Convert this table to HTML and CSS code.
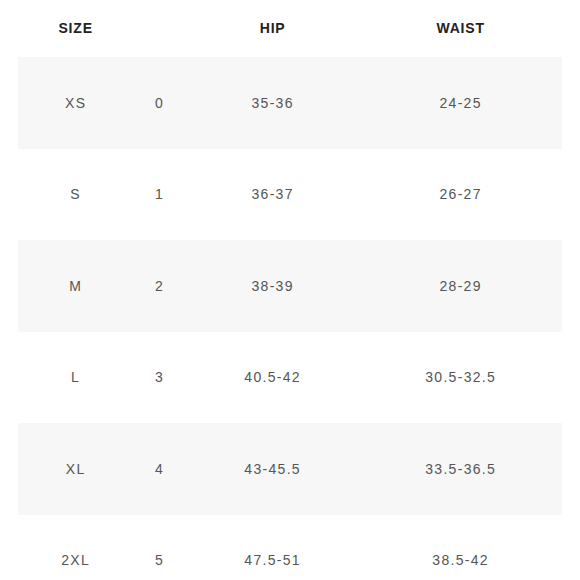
FILE: index.html
```html
<!DOCTYPE html>
<html>
<head>
<meta charset="utf-8">
<link rel="stylesheet" href="styles.css">
</head>
<body>
<div class="chart">
  <div class="row head">
    <div>SIZE</div><div></div><div>HIP</div><div>WAIST</div>
  </div>
  <div class="row shade"><div>XS</div><div>0</div><div>35-36</div><div>24-25</div></div>
  <div class="row"><div>S</div><div>1</div><div>36-37</div><div>26-27</div></div>
  <div class="row shade"><div>M</div><div>2</div><div>38-39</div><div>28-29</div></div>
  <div class="row"><div>L</div><div>3</div><div>40.5-42</div><div>30.5-32.5</div></div>
  <div class="row shade"><div>XL</div><div>4</div><div>43-45.5</div><div>33.5-36.5</div></div>
  <div class="row"><div>2XL</div><div>5</div><div>47.5-51</div><div>38.5-42</div></div>
</div>
</body>
</html>
```
FILE: styles.css
```css
html, body {
  margin: 0;
  padding: 0;
  background: #ffffff;
  overflow: hidden;
}
.chart {
  margin-left: 18px;
  width: 544px;
  font-family: "Liberation Sans", Arial, sans-serif;
}
.row {
  display: grid;
  grid-template-columns: 114px 54px 172px 204px;
  height: 91.5px;
  align-items: center;
  font-size: 14px;
  letter-spacing: 1.3px;
  color: #555555;
}
.row > div {
  text-align: center;
  padding-left: 1.3px;
}
.row.head {
  height: 57px;
  font-weight: bold;
  color: #222222;
  letter-spacing: 0.8px;
  padding-bottom: 2px;
  box-sizing: border-box;
}
.row.shade {
  background: #f7f7f7;
}
```
